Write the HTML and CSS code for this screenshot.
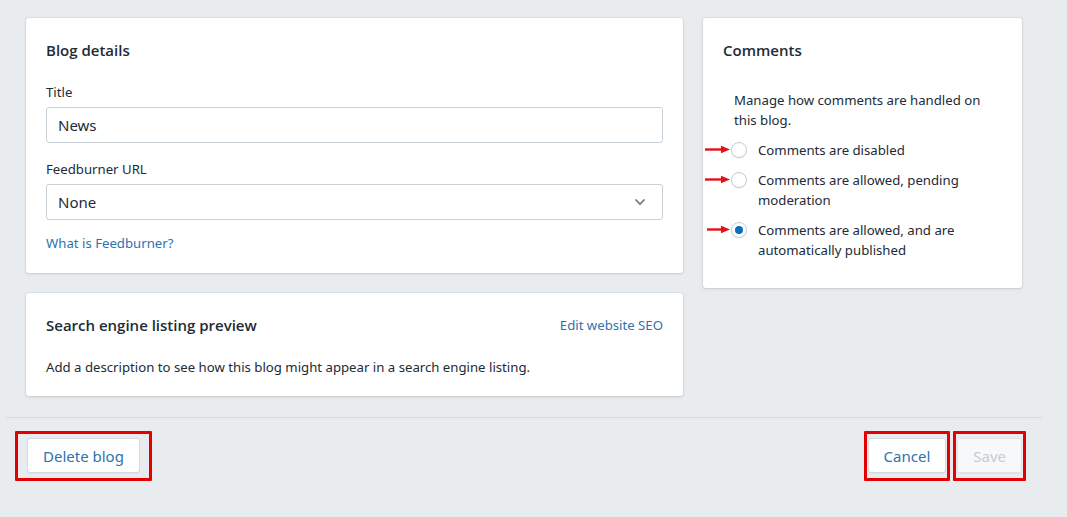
FILE: index.html
```html
<!DOCTYPE html>
<html lang="en">
<head>
<meta charset="utf-8">
<title>Blog details</title>
<link rel="stylesheet" href="styles.css">
</head>
<body>
<div class="page">
  <div class="layout">
    <div class="main-col">
      <section class="card">
        <h2 class="card-title">Blog details</h2>
        <label class="field-label">Title</label>
        <div class="input">News</div>
        <label class="field-label second">Feedburner URL</label>
        <div class="input select">
          <span>None</span>
          <svg class="chevron" width="12" height="8" viewBox="0 0 12 8"><path d="M1.5 1.5 L6 6 L10.5 1.5" fill="none" stroke="#637381" stroke-width="1.6"/></svg>
        </div>
        <a class="link help-link">What is Feedburner?</a>
      </section>
      <section class="card seo-card">
        <div class="card-head">
          <h2 class="card-title">Search engine listing preview</h2>
          <a class="link">Edit website SEO</a>
        </div>
        <p class="seo-text">Add a description to see how this blog might appear in a search engine listing.</p>
      </section>
    </div>
    <aside class="side-col">
      <section class="card comments-card">
        <h2 class="card-title">Comments</h2>
        <div class="comments-body">
          <p class="comments-desc">Manage how comments are handled on this blog.</p>
          <div class="radio-row">
            <span class="radio"><svg class="arrow" width="26" height="9" viewBox="0 0 26 9"><path d="M0 4.5 H18" stroke="#e3101a" stroke-width="2.4"/><path d="M16 0.8 L25 4.5 L16 8.2 Z" fill="#e3101a"/></svg></span>
            <span class="radio-label">Comments are disabled</span>
          </div>
          <div class="radio-row">
            <span class="radio"><svg class="arrow" width="26" height="9" viewBox="0 0 26 9"><path d="M0 4.5 H18" stroke="#e3101a" stroke-width="2.4"/><path d="M16 0.8 L25 4.5 L16 8.2 Z" fill="#e3101a"/></svg></span>
            <span class="radio-label">Comments are allowed, pending moderation</span>
          </div>
          <div class="radio-row">
            <span class="radio checked"><svg class="arrow short" width="24" height="9" viewBox="0 0 24 9"><path d="M0 4.5 H16" stroke="#e3101a" stroke-width="2.4"/><path d="M14 0.8 L23 4.5 L14 8.2 Z" fill="#e3101a"/></svg></span>
            <span class="radio-label">Comments are allowed, and are automatically published</span>
          </div>
        </div>
      </section>
    </aside>
  </div>
  <footer class="footer">
    <span class="marked wide"><button class="btn">Delete blog</button></span>
    <div class="footer-right">
      <span class="marked"><button class="btn">Cancel</button></span>
      <span class="marked"><button class="btn disabled">Save</button></span>
    </div>
  </footer>
</div>
</body>
</html>
```

FILE: styles.css
```css
* { box-sizing: border-box; }
html, body { margin: 0; padding: 0; }
body {
  background: #e9ecef;
  font-family: "Noto Sans", "Open Sans", "Liberation Sans", sans-serif;
  font-size: 13.2px;
  color: #212b36;
  width: 1067px;
  height: 517px;
  overflow: hidden;
}
.page {
  margin: 0 25px 0 6px;
  padding-top: 18px;
}
.layout {
  display: flex;
  gap: 20px;
  padding: 0 20px;
  align-items: flex-start;
}
.main-col {
  width: 657px;
  display: flex;
  flex-direction: column;
  gap: 20px;
}
.side-col { width: 319px; }
.card {
  background: #fff;
  border-radius: 3px;
  box-shadow: 0 0 0 1px rgba(63,63,68,0.05), 0 1px 3px 0 rgba(63,63,68,0.15);
  padding: 20px 20px 20px;
}
.card-title {
  margin: 0;
  font-family: "Open Sans", "Noto Sans", sans-serif;
  font-size: 15px;
  font-weight: 600;
  line-height: 24px;
  color: #212b36;
}
.field-label {
  display: block;
  margin-top: 20px;
  line-height: 20px;
}
.field-label.second { margin-top: 16px; }
.input {
  margin-top: 5px;
  height: 36px;
  border: 1px solid #c9d1d8;
  border-radius: 3px;
  padding: 0 11px;
  font-size: 15px;
  line-height: 34px;
  display: flex;
  align-items: center;
  justify-content: space-between;
}
.chevron { margin-right: 5px; }
.link { color: #2e72b0; text-decoration: none; line-height: 20px; }
.help-link { display: block; margin-top: 13px; }
.card-head {
  display: flex;
  justify-content: space-between;
  align-items: center;
}
.seo-card { padding-bottom: 19px; }
.seo-text { margin: 20px 0 0; line-height: 20px; }
.comments-card { padding-bottom: 28px; }
.comments-body { padding-left: 11px; margin-top: 28px; }
.comments-desc { margin: 0; line-height: 20px; padding-right: 8px; }
.radio-row {
  display: flex;
  align-items: flex-start;
  margin-top: 10px;
  margin-left: -3px;
}
.radio {
  position: relative;
  flex: none;
  width: 16px;
  height: 16px;
  margin-top: 2px;
  border: 1px solid #c4cdd5;
  border-radius: 50%;
  background: #fff;
  box-shadow: 0 1px 0 rgba(22,29,37,0.05);
}
.radio.checked::after {
  content: "";
  position: absolute;
  left: 3px; top: 3px;
  width: 8px; height: 8px;
  border-radius: 50%;
  background: #0a70b8;
}
.arrow {
  position: absolute;
  right: 15px;
  top: 2px;
}
.radio-label {
  margin-left: 11px;
  line-height: 20px;
}
.footer {
  margin-top: 21px;
  border-top: 1px solid #d5dadf;
  padding: 20px 20px 0 21px;
  display: flex;
  justify-content: space-between;
}
.footer-right { display: flex; gap: 11px; }
.marked { position: relative; display: inline-block; }
.marked::after {
  content: "";
  position: absolute;
  top: -7px; bottom: -8px; left: -4px; right: -4px;
  border: 3px solid #e30000;
  border-radius: 1px;
  pointer-events: none;
}
.marked.wide::after { left: -12px; right: -12px; }
.btn {
  font-family: inherit;
  font-size: 15px;
  height: 35px;
  padding: 0 15px;
  background: #fff;
  color: #2e72b0;
  border: 1px solid #d3dae0;
  border-radius: 3px;
  box-shadow: 0 1px 0 rgba(22,29,37,0.05);
}
.btn.disabled {
  background: #f6f8fa;
  color: #c4ccd4;
  border-color: #dfe3e8;
}
```
